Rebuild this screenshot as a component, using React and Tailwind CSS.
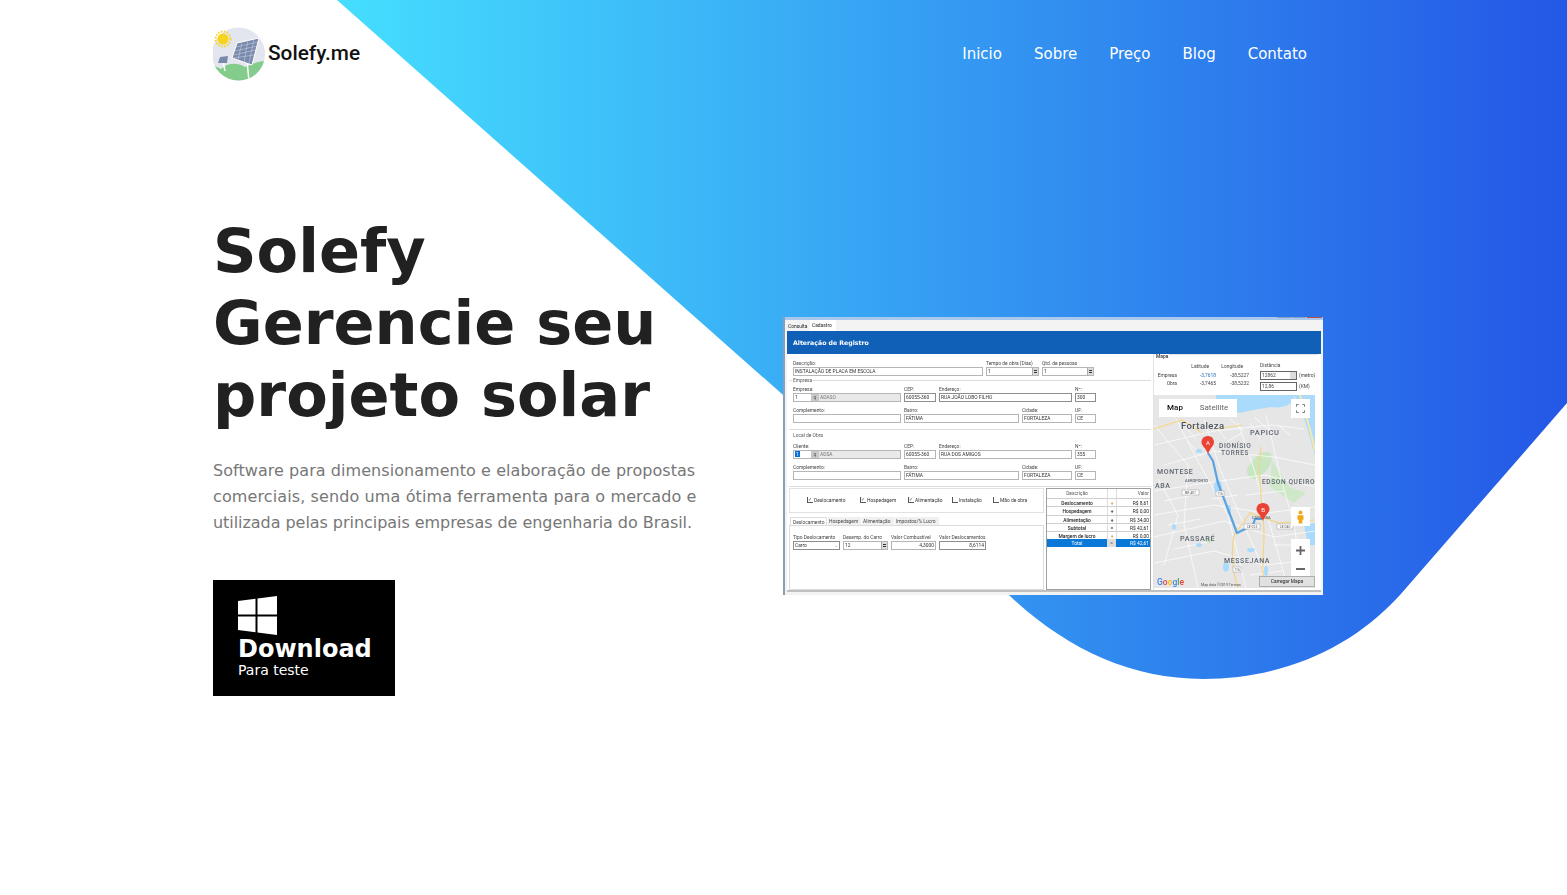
const navLinks = ['Inicio', 'Sobre', 'Preço', 'Blog', 'Contato'];

const Label = ({ children, className = '' }) => (
  <div className={`h-[5px] leading-[5px] text-[4.9px] whitespace-nowrap text-[#444] ${className}`}>{children}</div>
);

const Field = ({ label, value, w, gray, dark, spin, right, select }) => (
  <div style={{ width: w }} className="shrink-0 flex flex-col gap-[1px]">
    <Label>{label}</Label>
    <div
      className={`relative h-[9px] border text-[4.9px] leading-[7px] px-[1px] whitespace-nowrap overflow-hidden text-[#333] ${
        dark ? 'border-[#8d8d8d]' : 'border-[#b5b5b5]'
      } ${gray ? 'bg-[#e9e9e9]' : 'bg-white'} ${right ? 'text-right' : ''}`}
    >
      {value}
      {spin && (
        <span className="absolute right-0 top-0 w-[6px] h-full bg-[#dcdcdc] border-l border-[#aaa] flex flex-col items-center justify-center gap-[1px]">
          <span className="w-[3px] h-[1px] bg-[#333]" />
          <span className="w-[3px] h-[1px] bg-[#333]" />
        </span>
      )}
      {select && <span className="absolute right-[1px] top-0 text-[#888] text-[5px] leading-[6px]">⌄</span>}
    </div>
  </div>
);

const AddressRows = ({ empresa }) => (
  <div className="flex flex-col gap-[6px]">
    <div className="flex gap-[3px]">
      <div className="w-[108px] shrink-0 flex flex-col gap-[1px]">
        <Label>{empresa ? 'Empresa:' : 'Cliente:'}</Label>
        <div className="flex h-[9px] border border-[#b5b5b5] bg-[#e9e9e9] text-[4.9px] leading-[7px] text-[#777]">
          <span className={`w-[17px] bg-white px-[1px] text-[#333] ${empresa ? '' : 'text-white'}`}>
            {empresa ? '1' : <span className="bg-[#0a6fd6] px-[1px]">1</span>}
          </span>
          <span className="w-[8px] bg-[#c8c8c8] text-center text-[#555]">q</span>
          <span className="pl-[1px]">{empresa ? 'ADASO' : 'ADSA'}</span>
        </div>
      </div>
      <Field label="CEP:" value="60055-360" w={32} dark={empresa} />
      <Field label="Endereço:" value={empresa ? 'RUA JOÃO LOBO FILHO' : 'RUA DOS AMIGOS'} w={133} dark={empresa} />
      <Field label="Nº:" value={empresa ? '300' : '355'} w={21} dark={empresa} />
    </div>
    <div className="flex gap-[3px]">
      <Field label="Complemento:" value="" w={108} />
      <Field label="Bairro:" value="FÁTIMA" w={115} />
      <Field label="Cidade:" value="FORTALEZA" w={50} />
      <Field label="UF:" value="CE" w={21} />
    </div>
  </div>
);

const checks = [
  { label: 'Deslocamento', on: true, w: 53 },
  { label: 'Hospedagem', on: true, w: 48 },
  { label: 'Alimentação', on: true, w: 44 },
  { label: 'Instalação', on: false, w: 41 },
  { label: 'Mão de obra', on: false, w: 45 },
];

const costs = [
  ['Deslocamento', '+', 'R$ 8,61', 'text-[#c79a2c]'],
  ['Hospedagem', '+', 'R$ 0,00', 'text-[#222]'],
  ['Alimentação', '+', 'R$ 34,00', 'text-[#222]'],
  ['Subtotal', '=', 'R$ 42,61', 'text-[#222]'],
  ['Margem de lucro', '+', 'R$ 0,00', 'text-[#c79a2c]'],
];

const shields = [
  [28, 95, 17, 'BR 401'],
  [62, 96, 8, '116'],
  [90, 129, 16, 'CE 025'],
  [123, 129, 16, 'CE 040'],
  [79, 172, 8, '116'],
];

const MapLabel = ({ x, y, children, size = 7, fill = '#5f6670', spacing = 0.6 }) => (
  <text x={x} y={y} fontSize={size} fill={fill} letterSpacing={spacing} fontFamily="Roboto, sans-serif" fontWeight="500">
    {children}
  </text>
);

const MapDrawing = () => (
  <svg viewBox="0 0 161 193" className="absolute inset-0 w-full h-full">
    <rect width="161" height="193" fill="#e6e6e6" />
    <path d="M62 0H161V60C155 40 150 18 140 0C142 8 130 14 118 12C100 14 84 20 70 18C60 14 62 6 62 0Z" fill="#aadafc" />
    <path d="M146 0C152 20 158 40 161 56" stroke="#f8e9a8" strokeWidth="2" fill="none" />
    <path d="M93 74C100 62 108 54 116 58C122 66 112 80 101 84C96 84 92 80 93 74Z" fill="#c9e6c2" />
    <path d="M118 66L135 92L152 98L140 108L116 92Z" fill="#cfe8c8" />
    <path d="M150 130L161 128V150L154 150Z" fill="#aadafc" />
    <g stroke="#fff" strokeWidth="0.7" fill="none">
      <path d="M0 50L60 36L118 30L150 34" />
      <path d="M10 70L60 56L120 62L161 70" />
      <path d="M0 96L52 88L110 80L161 92" />
      <path d="M0 120L60 110L112 118L161 112" />
      <path d="M0 142L70 126L120 142L161 136" />
      <path d="M0 168L60 156L110 170L150 166" />
      <path d="M20 20L46 70L74 120L92 193" />
      <path d="M50 24L66 74L90 130L118 193" />
      <path d="M84 28L100 74L116 130L134 193" />
      <path d="M112 20L126 80L140 130L150 193" />
      <path d="M0 30L34 70L30 130L44 193" />
      <path d="M4 84L24 120L10 170" />
      <path d="M30 30L42 44M60 30L72 44M74 46L88 38M34 46L48 62M96 28L106 44M76 24L90 36M100 22L116 36M124 30L136 40" />
      <path d="M10 106L40 100M14 130L46 124M20 154L58 146M58 104L84 100M92 100L130 96M120 150L150 150M96 180L128 176" />
    </g>
    <g fill="#aadafc">
      <ellipse cx="45" cy="56" rx="3" ry="2" />
      <ellipse cx="75" cy="115" rx="2" ry="5" />
      <ellipse cx="64" cy="92" rx="4" ry="7" />
      <ellipse cx="72" cy="172" rx="3" ry="5" />
      <ellipse cx="97" cy="155" rx="4" ry="2" />
      <ellipse cx="20" cy="132" rx="2" ry="3" />
      <ellipse cx="45" cy="150" rx="3" ry="2" />
      <ellipse cx="112" cy="176" rx="2" ry="5" />
    </g>
    <ellipse cx="55" cy="145" rx="3" ry="3" fill="#c9e6c2" />
    <path d="M0 34L28 25L48 38M62 34L88 30" stroke="#f6d98b" strokeWidth="1.2" fill="none" />
    <path d="M107 52C102 80 110 110 110 140C110 160 106 175 112 193M82 135C76 150 78 175 84 193M84 135L96 118L125 128L160 125" stroke="#f6d37d" strokeWidth="1.1" fill="none" />
    <path d="M54 58L59 66L64 88L83 138L99 130L101 124L108 124" stroke="#5aa3e0" strokeWidth="2.2" strokeLinejoin="round" fill="none" />
    <MapLabel x="27" y="34" size={9.5} fill="#4f5660" spacing={0.4}>Fortaleza</MapLabel>
    <MapLabel x="96" y="40" size={7.5}>PAPICU</MapLabel>
    <MapLabel x="65" y="53" size={6.6}>DIONÍSIO</MapLabel>
    <MapLabel x="67" y="60" size={6.6}>TORRES</MapLabel>
    <MapLabel x="3" y="79" size={7}>MONTESE</MapLabel>
    <MapLabel x="1" y="93" size={7}>ABA</MapLabel>
    <MapLabel x="108" y="89" size={6.6}>EDSON QUEIRO</MapLabel>
    <MapLabel x="26" y="146" size={7.2}>PASSARÉ</MapLabel>
    <MapLabel x="70" y="168" size={7}>MESSEJANA</MapLabel>
    <MapLabel x="31" y="87" size={4} spacing={0}>AEROPORTO</MapLabel>
    <MapLabel x="98" y="124" size={4} spacing={0}>CAMBEBA</MapLabel>
    {shields.map(([x, y, w, t]) => (
      <g key={`${x}-${y}`}>
        <rect x={x} y={y} width={w} height="5" fill="#fff" stroke="#8b8b8b" strokeWidth="0.4" />
        <text x={x + w / 2} y={y + 4} fontSize="3.4" textAnchor="middle" fill="#555" fontFamily="Roboto, sans-serif">{t}</text>
      </g>
    ))}
    <path d="M54 41C49 41 47.500 45 47.500 47C47.500 51 52 53 54 59C56 53 60 51 60 47C60 45 58.500 41 54 41Z" fill="#ea4335" />
    <text x="54" y="49.500" fontSize="6" textAnchor="middle" fill="#fff" fontFamily="Roboto, sans-serif">A</text>
    <path d="M109 108C104 108 102.500 112 102.500 114C102.500 118 107 120 109 126C111 120 115.500 118 115.500 114C115.500 112 114 108 109 108Z" fill="#ea4335" />
    <text x="109" y="116.500" fontSize="6" textAnchor="middle" fill="#fff" fontFamily="Roboto, sans-serif">B</text>
    <text x="3" y="190" fontSize="8.500" fontFamily="Roboto, sans-serif" fontWeight="500">
      <tspan fill="#4285f4">G</tspan>
      <tspan fill="#ea4335">o</tspan>
      <tspan fill="#fbbc05">o</tspan>
      <tspan fill="#4285f4">g</tspan>
      <tspan fill="#34a853">l</tspan>
      <tspan fill="#ea4335">e</tspan>
    </text>
    <text x="47" y="191" fontSize="3.600" fill="#555" fontFamily="Roboto, sans-serif">Map data ©2019  Termos</text>
  </svg>
);

const MapPanel = () => (
  <div className="relative w-[161px] h-[193px] overflow-hidden">
    <MapDrawing />
    <div className="absolute left-[5px] top-[4px] flex h-[18px] bg-white text-[8px] leading-[18px]">
      <span className="w-[32px] text-center text-[#111] font-medium" style={{ fontFamily: 'Roboto' }}>Map</span>
      <span className="w-[46px] text-center text-[#666]" style={{ fontFamily: 'Roboto' }}>Satellite</span>
    </div>
    <div className="absolute right-[5px] top-[4px] w-[19px] h-[19px] bg-white flex items-center justify-center">
      <svg viewBox="0 0 10 10" className="w-[9px] h-[9px]" fill="none" stroke="#666" strokeWidth="1">
        <path d="M0.500 3V0.500H3M7 0.500H9.500V3M9.500 7V9.500H7M3 9.500H0.500V7" />
      </svg>
    </div>
    <div className="absolute right-[5px] top-[112px] w-[19px] h-[19px] bg-white flex items-center justify-center">
      <svg viewBox="0 0 12 18" className="w-[9px] h-[14px]" fill="#f2a81d">
        <circle cx="6" cy="3" r="2.600" />
        <path d="M2 6.500h8v6h-1.500v5h-5v-5H2z" />
      </svg>
    </div>
    <div className="absolute right-[5px] top-[144px] w-[19px] h-[37px] bg-white flex flex-col items-center justify-around">
      <svg viewBox="0 0 10 10" className="w-[9px] h-[9px]" fill="#666"><path d="M4 0h2v4h4v2H6v4H4V6H0V4h4z" /></svg>
      <span className="w-[9px] h-[2px] bg-[#666]" />
    </div>
    <div className="absolute right-0 bottom-[1px] w-[56px] h-[11px] bg-[#e1e1e1] border border-[#adadad] text-center text-[4.9px] leading-[9px] text-[#222]">
      Carregar Mapa
    </div>
  </div>
);

const AppWindow = () => (
  <div className="w-[540px] h-[278px] flex flex-col border-l-2 border-[#8d9db6] bg-[#f3f3f3] blur-[0.25px]" style={{ fontFamily: 'Roboto, sans-serif' }}>
    <div className="h-[3px] bg-[#a8c8ee] flex justify-end gap-[1px] pr-[1px]">
      <span className="w-[14px] h-[1px] bg-[#8aa0bf]" />
      <span className="w-[14px] h-[1px] bg-[#8aa0bf]" />
      <span className="w-[15px] h-[1px] bg-[#c04a4a]" />
    </div>
    <div className="h-[11px] flex items-end pl-[2px] text-[4.9px] text-[#222]">
      <span className="w-[23px] h-[9px] leading-[9px] pl-[1px]">Consulta</span>
      <span className="w-[26px] h-[11px] leading-[10px] pl-[2px] bg-white">Cadastro</span>
    </div>
    <div className="mx-[2px] h-[23px] bg-[#1160b8] flex items-center pl-[6px] text-[6.2px] font-bold text-white" style={{ fontFamily: 'DejaVu Sans, sans-serif' }}>
      Alteração de Registro
    </div>
    <div className="mx-[2px] flex-1 bg-white flex gap-[2px] border-b-2 border-[#c0c0c0] mb-[3px] min-h-0">
      <div className="w-[364px] shrink-0 flex flex-col pl-[2px]">
        <div className="pl-[4px] pt-[7px] h-[26px] shrink-0 flex gap-[3px]">
          <Field label="Descrição:" value="INSTALAÇÃO DE PLACA EM ESCOLA" w={190} />
          <Field label="Tempo de obra (Dias)" value="1" w={53} spin />
          <Field label="Qtd. de pessoas" value="1" w={52} spin />
        </div>
        <div className="relative shrink-0 border-t border-b border-[#dcdcdc] h-[50px] pl-[4px] pt-[6px]">
          <span className="absolute left-[3px] -top-[3px] bg-white px-[1px] text-[4.9px] leading-[5px] text-[#555]">Empresa</span>
          <AddressRows empresa />
        </div>
        <div className="relative shrink-0 border-b border-[#dcdcdc] h-[52px] mt-[5px] pl-[4px] pt-[9px]">
          <span className="absolute left-[3px] -top-[2px] bg-white px-[1px] text-[4.9px] leading-[5px] text-[#555]">Local de Obra</span>
          <AddressRows />
        </div>
        <div className="flex gap-[2px] mt-[1px] flex-1 min-h-0">
          <div className="w-[255px] shrink-0 flex flex-col">
            <div className="h-[25px] border border-[#e2e2e2] flex items-center pl-[17px]">
              {checks.map((c) => (
                <div key={c.label} style={{ width: c.w }} className="flex items-center gap-[1px] text-[4.9px] text-[#333] whitespace-nowrap">
                  <span className="w-[6px] h-[6px] border-l border-b border-[#555] text-[5px] leading-[5px] text-[#555]">{c.on ? '✓' : ''}</span>
                  {c.label}
                </div>
              ))}
            </div>
            <div className="flex mt-[4px] h-[8px] pl-[1px] gap-[1px] text-[4.9px] leading-[8px] text-[#444]">
              <span className="w-[37px] pl-[2px] bg-white border-t border-l border-r border-[#ddd]">Deslocamento</span>
              <span className="w-[33px] pl-[1px] bg-[#f0f0f0]">Hospedagem</span>
              <span className="w-[32px] pl-[1px] bg-[#f0f0f0]">Alimentação</span>
              <span className="w-[44px] pl-[1px] bg-[#f0f0f0]">Impostos/% Lucro</span>
            </div>
            <div className="flex-1 border border-[#dcdcdc] flex gap-[3px] pl-[3px] pt-[9px] items-start">
              <Field label="Tipo Deslocamento" value="Carro" w={47} select dark />
              <Field label="Desemp. do Carro" value="12" w={45} spin />
              <Field label="Valor Combustível" value="4,3000" w={45} right />
              <Field label="Valor Deslocamentos" value="8,6114" w={47} right dark />
            </div>
          </div>
          <div className="w-[105px] shrink-0 border border-[#a0a0a0] flex flex-col text-[4.9px] text-[#222]">
            <div className="flex h-[9px] leading-[9px] text-[#555]">
              <span className="w-[60px] text-center">Descrição</span>
              <span className="w-[9px] border-l border-[#ddd]" />
              <span className="flex-1 text-right pr-[1px] border-l border-[#ddd]">Valor</span>
            </div>
            {costs.map(([name, sign, val, signColor]) => (
              <div key={name} className="flex h-[8.3px] leading-[8px] border-t border-[#cfcfcf]">
                <span className="w-[60px] text-center font-medium">{name}</span>
                <span className={`w-[9px] text-center border-l border-[#ddd] font-bold ${signColor}`}>{sign}</span>
                <span className="flex-1 text-right pr-[1px] border-l border-[#ddd]">{val}</span>
              </div>
            ))}
            <div className="flex h-[8px] leading-[8px] bg-[#0a78d6] text-white">
              <span className="w-[60px] text-center">Total</span>
              <span className="w-[9px] text-center bg-[#dcdcdc] text-[#666]">=</span>
              <span className="flex-1 text-right pr-[1px]">R$ 42,61</span>
            </div>
          </div>
        </div>
      </div>
      <div className="w-[165px] shrink-0 flex flex-col border-l border-t border-[#e2e2e2] relative">
        <span className="absolute left-[1px] -top-[1px] bg-white px-[1px] text-[4.9px] leading-[5px] font-medium text-[#333]">Mapa</span>
        <div className="h-[40px] flex pl-[2px] pt-[9px] text-[4.9px] text-[#444]">
          <div className="w-[21px] pt-[9px] flex flex-col gap-[3px] text-right">
            <span className="leading-[5px]">Empresa</span>
            <span className="leading-[5px]">Obra</span>
          </div>
          <div className="w-[39px] flex flex-col gap-[3px] text-right">
            <span className="leading-[5px] pr-[7px]">Latitude</span>
            <span className="leading-[5px] mt-[1px] text-[#2a6fb8]">-3,7618</span>
            <span className="leading-[5px]">-3,7465</span>
          </div>
          <div className="w-[33px] flex flex-col gap-[3px] text-right">
            <span className="leading-[5px] pr-[6px]">Longitude</span>
            <span className="leading-[5px] mt-[1px]">-38,5227</span>
            <span className="leading-[5px]">-38,5232</span>
          </div>
          <div className="ml-[11px] w-[37px] flex flex-col -mt-[1px]">
            <span className="leading-[5px]">Distância</span>
            <div className="relative h-[9px] mt-[3px] border border-[#666] bg-white leading-[7px] px-[1px]">
              12862
              <span className="absolute right-0 top-0 w-[6px] h-full bg-[#dcdcdc]" />
            </div>
            <div className="h-[9px] mt-[2px] border border-[#666] bg-white leading-[7px] px-[1px]">12,86</div>
          </div>
          <div className="pl-[2px] pt-[9px] flex flex-col gap-[6px]">
            <span className="leading-[5px]">(metro)</span>
            <span className="leading-[5px]">(KM)</span>
          </div>
        </div>
        <MapPanel />
      </div>
    </div>
  </div>
);

const Logo = () => (
  <div className="flex items-center">
    <svg viewBox="0 0 54 58" className="w-[54px] h-[58px]">
      <defs>
        <clipPath id="logo-disc"><circle cx="25.500" cy="29" r="26.500" /></clipPath>
      </defs>
      <circle cx="25.500" cy="29" r="26.500" fill="#e3e6ef" />
      <g clipPath="url(#logo-disc)">
        <path d="M0 40L8 44C14 38 24 37 32 42C38 40 44 36 54 36V60H0Z" fill="#84cc8c" />
        <path d="M34 36L36 56M10 36L12 46" stroke="#fff" strokeWidth="1.500" fill="none" />
      </g>
      <path d="M24 18L46 13L39 40L19 33Z" fill="#7889ab" stroke="#fff" strokeWidth="1" />
      <path d="M23 22L45 17M22 26L44 21M21 30L42 25M20 33L41 30M29 17L25 35M35 15L31 37M41 14L36 39" stroke="#c6cfe0" strokeWidth="0.600" />
      <path d="M7 32L15 31L14 38L5 38Z" fill="#7889ab" />
      <circle cx="10" cy="14" r="5.500" fill="#f7d21f" />
      <circle cx="10" cy="14" r="7.500" fill="none" stroke="#f7d21f" strokeWidth="2" strokeDasharray="1.500 1.500" />
    </svg>
    <span className="ml-[1px] text-[20.800px] font-medium text-[#111]" style={{ fontFamily: 'Roboto, sans-serif' }}>Solefy.me</span>
  </div>
);

export default function App() {
  return (
    <div className="relative h-[895px] overflow-hidden bg-white text-[#212121]" style={{ fontFamily: '"DejaVu Sans", sans-serif' }}>
      <svg className="absolute inset-0 w-full h-full" viewBox="0 0 1567 895">
        <defs>
          <linearGradient id="hero-bg" x1="340" y1="0" x2="1567" y2="0" gradientUnits="userSpaceOnUse">
            <stop offset="0" stopColor="#45defe" />
            <stop offset="1" stopColor="#2457e6" />
          </linearGradient>
        </defs>
        <path
          d="M337 0H1567V403L1400 595C1350 650 1280 679 1203 679C1130 679 1065 648 1010 596Z"
          fill="url(#hero-bg)"
        />
      </svg>

      <div className="relative ml-[213px] w-[1110px] pt-[25px]">
        <header className="flex items-center justify-between h-[58px] pr-[16px]">
          <Logo />
          <nav className="flex gap-[32px] text-[15px] text-white">
            {navLinks.map((link) => (
              <a key={link}>{link}</a>
            ))}
          </nav>
        </header>

        <section className="flex justify-between">
          <div className="w-[500px] pt-[132px]">
            <h1 className="text-[60.500px] leading-[72px] font-bold text-[#212121]">
              Solefy<br />Gerencie seu<br />projeto solar
            </h1>
            <p className="mt-[27px] text-[16px] leading-[26px] text-[#777] whitespace-nowrap">
              <span className="block tracking-[0.055px]">Software para dimensionamento e elaboração de propostas</span>
              <span className="block tracking-[0.11px]">comerciais, sendo uma ótima ferramenta para o mercado e</span>
              <span className="block tracking-[-0.05px]">utilizada pelas principais empresas de engenharia do Brasil.</span>
            </p>
            <div className="mt-[44px] w-[182px] h-[116px] bg-black text-white pl-[25px] pt-[16px]">
              <svg viewBox="0 0 39 39" className="w-[39px] h-[39px]" fill="#fff">
                <path d="M0 5L17.500 2.800V18.500H0ZM19.500 2.500L39 0V18.500H19.500ZM0 20.500H17.500V36.200L0 34ZM19.500 20.500H39V39L19.500 36.500Z" />
              </svg>
              <div className="mt-[1px] text-[24px] leading-[26px] font-bold">Download</div>
              <div className="text-[14px] leading-[17px]">Para teste</div>
            </div>
          </div>
          <div className="pt-[234px]">
            <AppWindow />
          </div>
        </section>
      </div>
    </div>
  );
}
